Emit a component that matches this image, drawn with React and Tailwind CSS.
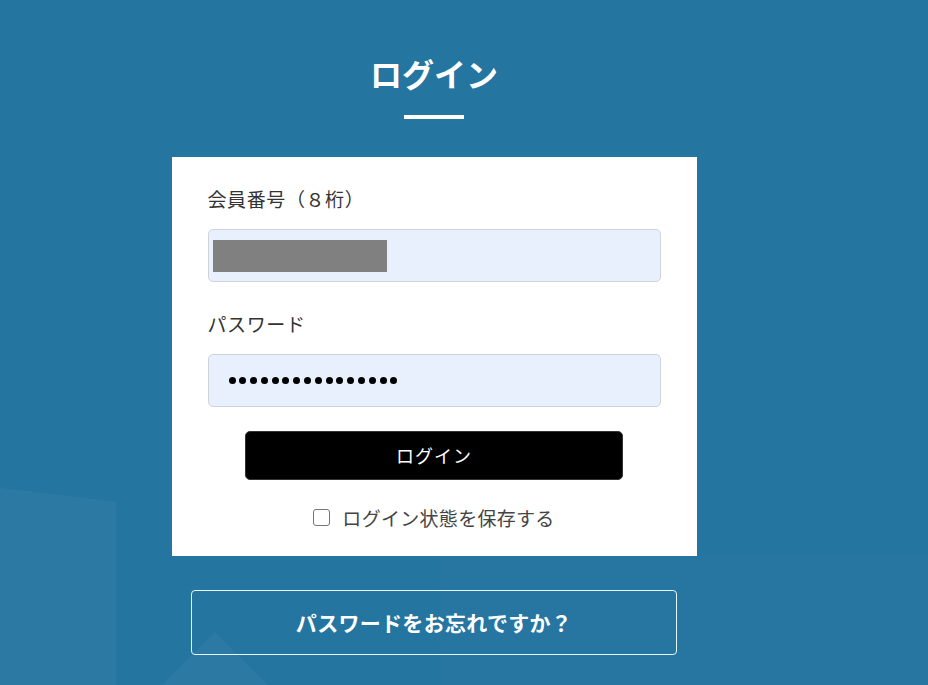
import React from "react";

const jp = { fontFamily: '"Noto Sans CJK JP", "Noto Sans", sans-serif' };

export default function App() {
  return (
    <div className="relative w-full min-h-[685px] overflow-hidden bg-[#2475a0]" style={jp}>
      {/* subtle background shapes */}
      <div className="absolute left-0 top-[488px] w-[116px] h-[200px] bg-white/[0.035] [clip-path:polygon(0_0,100%_14px,100%_100%,0_100%)]" />
      <div className="absolute left-[155px] top-[632px] w-[120px] h-[60px] bg-white/[0.035] [clip-path:polygon(50%_0,100%_100%,0_100%)]" />
      <div className="absolute left-[440px] top-[555px] w-[488px] h-[130px] bg-white/[0.012]" />

      <div className="relative flex flex-col items-center pr-[60px]">
        <h1 className="mt-[49px] text-[32px] leading-[48px] font-bold text-white">ログイン</h1>
        <div className="mt-[18px] w-[60px] h-[4px] bg-white" />

        <div className="mt-[38px] w-[525px] bg-white pt-[28px] pb-[25px] px-[36px] flex flex-col">
          <label className="text-[19px] leading-[27px] text-[#333] tracking-[0.6px]">会員番号（８桁）</label>
          <div className="mt-[17px] h-[53px] w-[453px] rounded-[5px] border border-[#cfd4da] bg-[#e8f0fe] flex items-center pl-[4px]">
            <div className="w-[174px] h-[32px] bg-[#808080]" />
          </div>

          <label className="mt-[28px] text-[19px] leading-[27px] text-[#333] tracking-[0.6px]">パスワード</label>
          <div className="mt-[17px] h-[53px] w-[453px] rounded-[5px] border border-[#cfd4da] bg-[#e8f0fe] flex items-center pl-[20px] gap-[3.8px]">
            {Array.from({ length: 16 }).map((_, i) => (
              <span key={i} className="block w-[7px] h-[7px] rounded-full bg-black" />
            ))}
          </div>

          <div className="mt-[24px] flex justify-center">
            <button className="w-[378px] h-[49px] rounded-[5px] bg-black text-white text-[18px] tracking-[1px] border border-[#333]">
              ログイン
            </button>
          </div>

          <div className="mt-[24px] flex items-center justify-center gap-[12px] h-[27px]">
            <span className="block w-[17px] h-[17px] rounded-[3px] border-[1.5px] border-[#767676] bg-white" />
            <span className="text-[19px] leading-[27px] text-[#444] tracking-[0.3px]">ログイン状態を保存する</span>
          </div>
        </div>

        <button className="mt-[34px] w-[486px] h-[65px] rounded-[4px] border border-[#e6f7ff] text-white text-[21px] font-bold tracking-[0.3px]">
          パスワードをお忘れですか？
        </button>
      </div>
    </div>
  );
}
